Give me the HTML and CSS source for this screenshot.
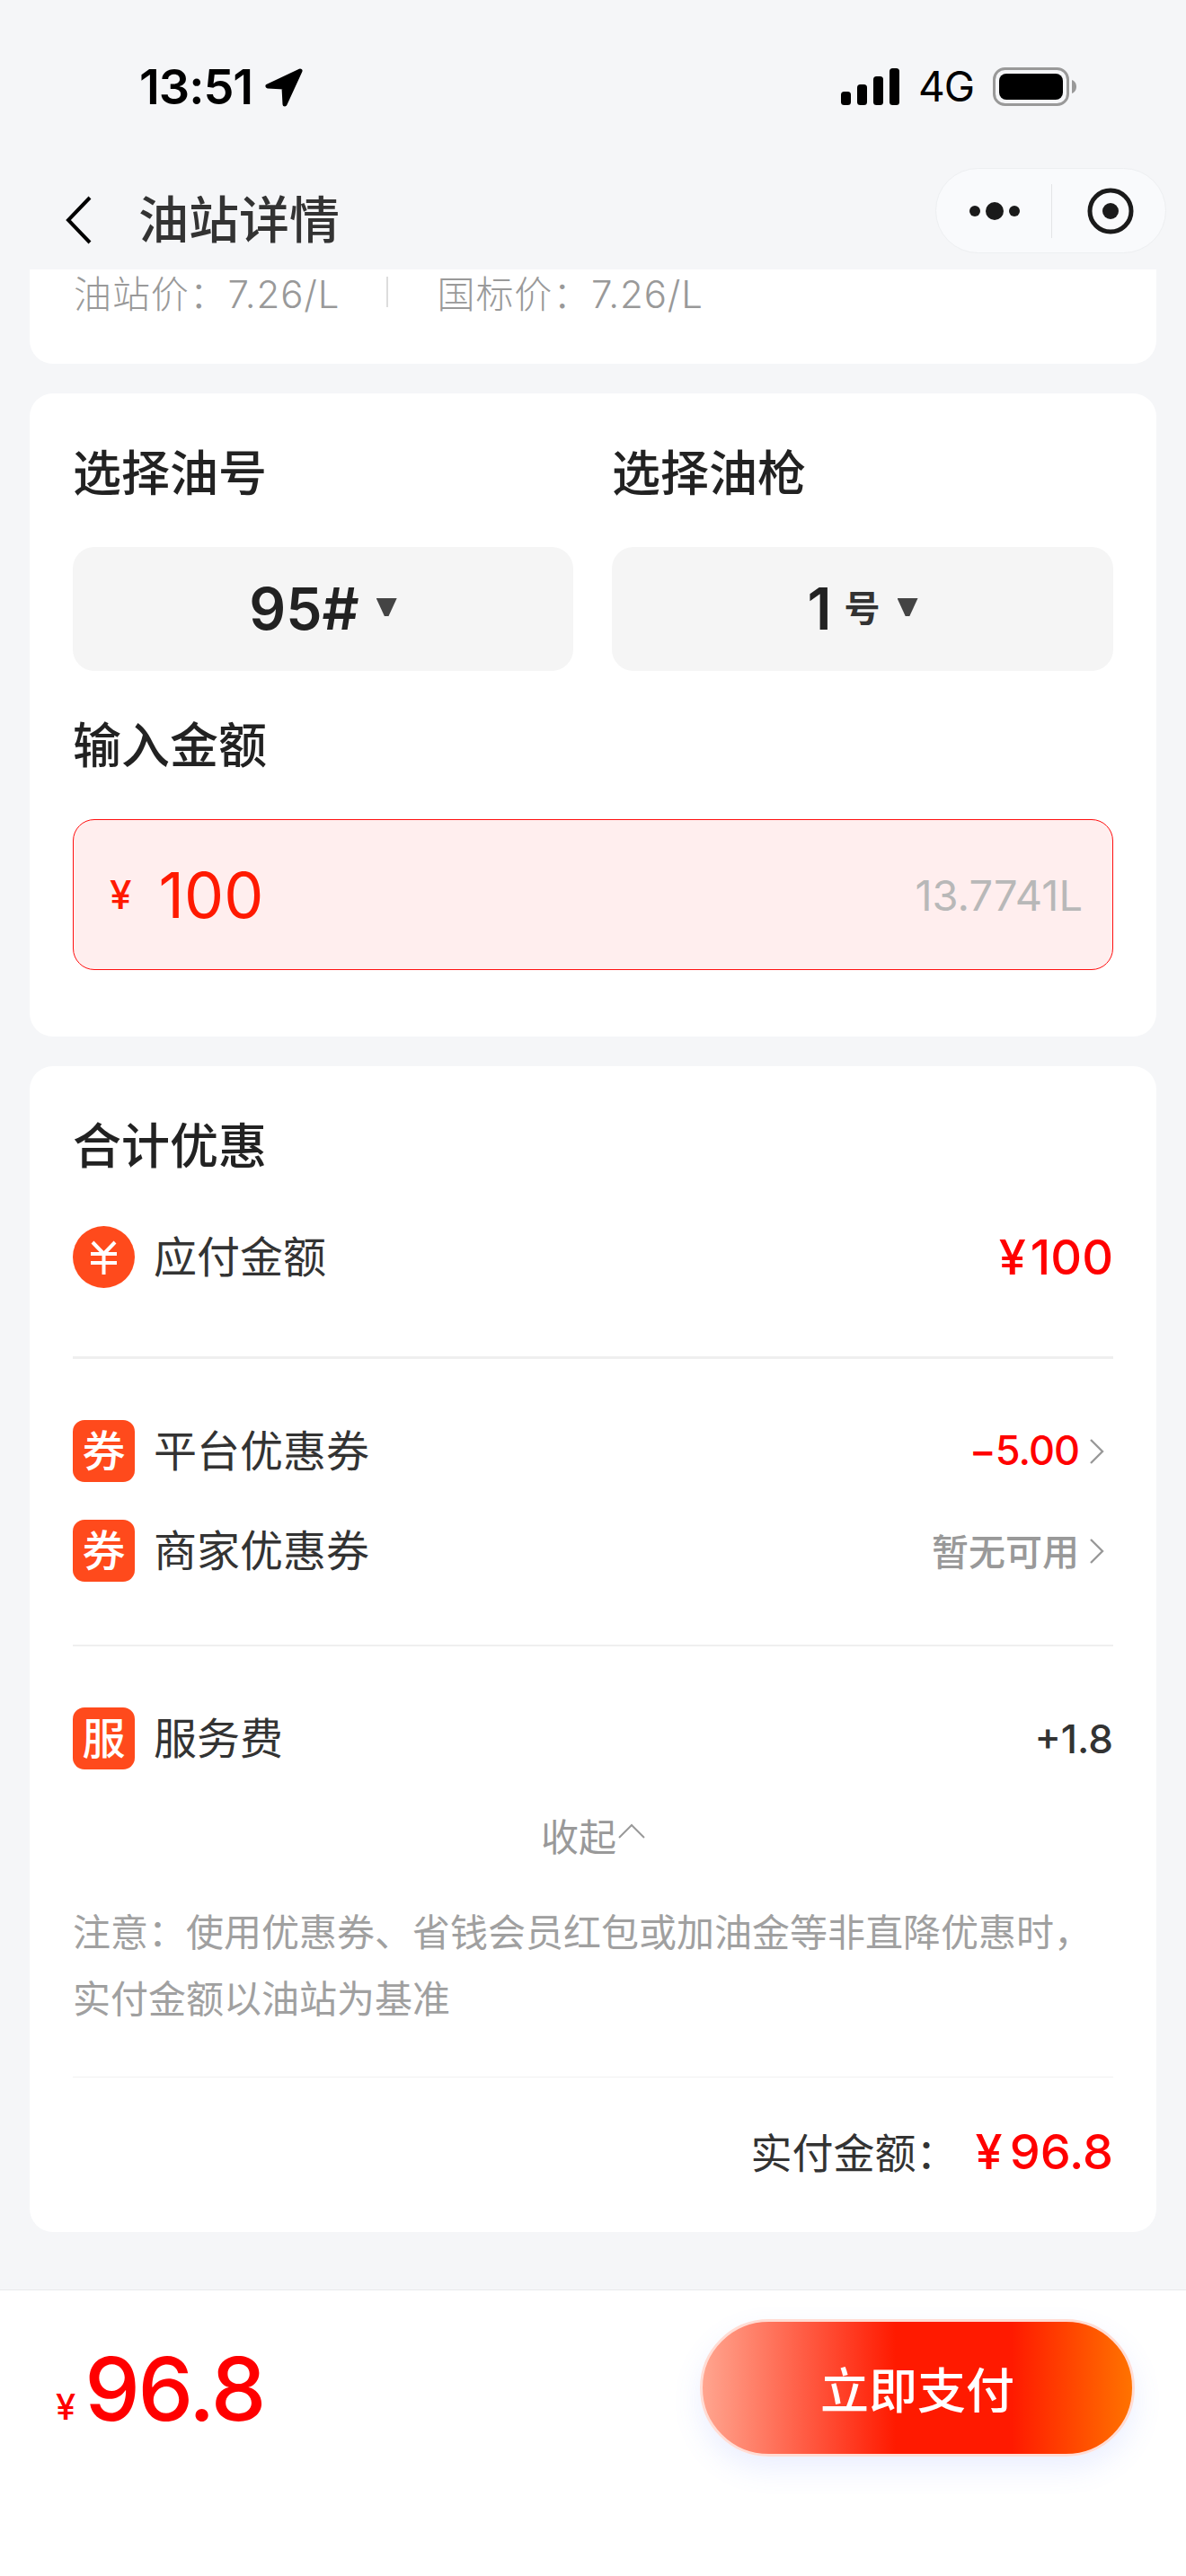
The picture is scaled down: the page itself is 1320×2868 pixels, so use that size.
FILE: index.html
```html
<!DOCTYPE html>
<html lang="zh-CN">
<head>
<meta charset="utf-8">
<title>油站详情</title>
<link rel="stylesheet" href="styles.css">
</head>
<body>
<div class="page">
  <header class="status">
    <div class="status-left">
      <span class="time">13:51</span>
      <svg class="loc" width="44" height="44" viewBox="0 0 44 44"><path d="M40 4 L4 21 L22 22 L23 41 Z" fill="#000" stroke="#000" stroke-width="5" stroke-linejoin="round"/></svg>
    </div>
    <div class="status-right">
      <svg class="signal" width="65" height="41" viewBox="0 0 65 41"><rect x="0" y="26" width="11" height="15" rx="3.5"/><rect x="18" y="18" width="11" height="23" rx="3.5"/><rect x="36" y="9" width="11" height="32" rx="3.5"/><rect x="54" y="0" width="11" height="41" rx="3.5"/></svg>
      <span class="net">4G</span>
      <svg class="battery" width="93" height="43" viewBox="0 0 93 43"><rect x="1.5" y="1.5" width="82" height="40" rx="12" fill="none" stroke="#999" stroke-width="3"/><rect x="7" y="7" width="71" height="29" rx="8" fill="#000"/><path d="M88 14 C91 15 93 18 93 21.5 C93 25 91 28 88 29 Z" fill="#999"/></svg>
    </div>
  </header>
  <nav class="nav">
    <svg class="back" width="29" height="54" viewBox="0 0 29 54"><path d="M27 2 L3 27 L27 52" fill="none" stroke="#000" stroke-width="4"/></svg>
    <h1 class="nav-title">油站详情</h1>
    <div class="capsule">
      <svg class="capsule-more" width="128" height="60" viewBox="0 0 128 60"><circle cx="43" cy="30" r="6"/><circle cx="65" cy="30" r="10"/><circle cx="87" cy="30" r="6"/></svg>
      <span class="capsule-line"></span>
      <svg class="capsule-target" width="128" height="60" viewBox="0 0 128 60"><circle cx="65" cy="30" r="23" fill="none" stroke="#1a1a1a" stroke-width="5"/><circle cx="65" cy="30" r="9" fill="#1a1a1a"/></svg>
    </div>
  </nav>
  <main class="content">
    <section class="card card-top">
      <span class="price">油站价：7.26/L</span>
      <span class="price-line"></span>
      <span class="price">国标价：7.26/L</span>
    </section>
    <section class="card card-form">
      <div class="picker-grid">
        <div class="picker-col">
          <h2 class="card-title">选择油号</h2>
          <div class="picker">
            <span class="picker-val">95#</span>
            <span class="tri"></span>
          </div>
        </div>
        <div class="picker-col">
          <h2 class="card-title">选择油枪</h2>
          <div class="picker">
            <span class="picker-val">1</span>
            <span class="picker-unit">号</span>
            <span class="tri"></span>
          </div>
        </div>
      </div>
      <h2 class="card-title amount-title">输入金额</h2>
      <div class="amount">
        <span class="amount-yen">¥</span>
        <span class="amount-val">100</span>
        <span class="amount-litre">13.7741L</span>
      </div>
    </section>
    <section class="card card-sum">
      <h2 class="card-title">合计优惠</h2>
      <div class="row row-first">
        <svg class="coin" width="69" height="69" viewBox="0 0 69 69"><circle cx="34.5" cy="34.5" r="34.5" fill="#ff4a1c"/><path d="M22 18 L34.5 31 L47 18 M20 31 H49 M20 41 H49 M34.5 31 V54" fill="none" stroke="#fff" stroke-width="4"/></svg>
        <span class="row-label">应付金额</span>
        <span class="row-total">¥<span class="thin-gap"></span>100</span>
      </div>
      <div class="rule"></div>
      <div class="row row-a">
        <span class="badge">券</span>
        <span class="row-label">平台优惠券</span>
        <span class="row-minus">−5.00</span>
        <svg class="chev" width="18" height="30" viewBox="0 0 18 30"><path d="M2 2 L15 15 L2 28" fill="none" stroke="#999" stroke-width="2.4"/></svg>
      </div>
      <div class="row row-b">
        <span class="badge">券</span>
        <span class="row-label">商家优惠券</span>
        <span class="row-none">暂无可用</span>
        <svg class="chev" width="18" height="30" viewBox="0 0 18 30"><path d="M2 2 L15 15 L2 28" fill="none" stroke="#999" stroke-width="2.4"/></svg>
      </div>
      <div class="rule rule-b"></div>
      <div class="row row-a">
        <span class="badge">服</span>
        <span class="row-label">服务费</span>
        <span class="row-plus">+1.8</span>
      </div>
      <div class="collapse">
        <span>收起</span>
        <svg class="caret" width="30" height="17" viewBox="0 0 30 17"><path d="M1 16 L15 2 L29 16" fill="none" stroke="#999" stroke-width="2"/></svg>
      </div>
      <p class="note">注意：使用优惠券、省钱会员红包或加油金等非直降优惠时，<br>实付金额以油站为基准</p>
      <div class="hair"></div>
      <div class="paid">
        <span class="paid-label">实付金额：</span>
        <span class="paid-val">¥<span class="thin-gap"></span>96.8</span>
      </div>
    </section>
  </main>
  <footer class="bar">
    <div class="bar-price">
      <span class="bar-yen">¥</span>
      <span class="bar-val">96.8</span>
    </div>
    <button class="pay" type="button">立即支付</button>
  </footer>
</div>
</body>
</html>
```
FILE: styles.css
```css
* { box-sizing: border-box; }
html, body { margin: 0; padding: 0; }
body {
  background: #f5f6f8;
  font-family: Inter, "Noto Sans CJK SC", sans-serif;
  color: #222;
}
h1, h2, p { margin: 0; font-weight: 500; }
svg { display: block; flex: none; }

.page {
  width: 1320px;
  height: 2868px;
  overflow: hidden;
  display: flex;
  flex-direction: column;
}

/* status bar */
.status {
  height: 170px;
  flex: none;
  display: flex;
  justify-content: space-between;
  padding: 70px 122px 0 155px;
}
.status-left { display: flex; align-items: center; height: 54px; }
.time { font-size: 54px; line-height: 54px; font-weight: 600; color: #000; letter-spacing: -1px; }
.loc { margin-left: 13px; }
.status-right { display: flex; align-items: flex-start; height: 54px; margin-top: 5px; }
.signal { fill: #000; margin-top: 1px; }
.net { font-size: 46px; line-height: 42px; margin-left: 21px; color: #000; font-weight: 400; letter-spacing: -1px; }
.battery { margin-left: 21px; }

/* nav */
.nav {
  height: 130px;
  flex: none;
  display: flex;
  align-items: flex-start;
  padding: 17px 22px 0 73px;
}
.back { margin-top: 31px; }
.nav-title {
  margin: 13px 0 0 52px;
  font-size: 56px;
  line-height: 90px;
  color: #333;
}
.capsule {
  margin-left: auto;
  width: 257px;
  height: 95px;
  border-radius: 48px;
  background: #f9fafc;
  border: 1px solid #edeff1;
  display: flex;
  align-items: center;
}
.capsule-more { fill: #1a1a1a; }
.capsule-line { width: 1px; height: 60px; background: #e4e5e7; flex: none; }

/* content */
.content {
  flex: 1;
  padding: 0 33px;
  display: flex;
  flex-direction: column;
  gap: 33px;
}
.card { background: #fff; border-radius: 26px; }

.card-top {
  height: 105px;
  border-radius: 0 0 26px 26px;
  padding: 0 0 0 49px;
  display: flex;
  align-items: flex-start;
}
.price { font-size: 42px; line-height: 56px; color: #999; font-weight: 300; letter-spacing: 0.9px; }
.price-line { width: 2px; height: 34px; background: #ddd; margin: 8px 54px 0 52px; }

.card-form { height: 716px; padding: 52px 48px 0; }
.card-title { font-size: 54px; line-height: 76px; color: #222; font-weight: 500; }
.picker-grid { display: grid; grid-template-columns: 557px 558px; column-gap: 43px; }
.picker {
  margin-top: 43px;
  height: 138px;
  border-radius: 24px;
  background: #f5f5f5;
  display: flex;
  align-items: center;
  justify-content: center;
}
.picker-val { font-size: 64px; line-height: 76px; font-weight: 600; color: #222; }
.picker-unit { font-size: 40px; line-height: 60px; font-weight: 600; color: #333; margin-left: 14px; }
.tri {
  width: 23px;
  height: 20px;
  margin-left: 19px;
  margin-top: -4px;
  background: #444;
  clip-path: polygon(0 0, 100% 0, 60% 100%, 40% 100%);
}
.amount-title { margin-top: 46px; }
.amount {
  margin-top: 43px;
  height: 168px;
  border-radius: 24px;
  background: #ffeeee;
  border: 1px solid #ff1010;
  display: flex;
  align-items: center;
  padding: 0 33px 0 40px;
}
.amount-yen { font-size: 44px; color: #ff1a00; font-weight: 500; }
.amount-val { font-size: 70px; color: #ff1a00; margin-left: 30px; font-weight: 400; }
.amount-litre { margin-left: auto; font-size: 47px; color: #b8b8b8; font-weight: 400; }

.card-sum { height: 1298px; padding: 52px 48px 0; }
.row { display: flex; align-items: center; height: 69px; }
.row-first { margin-top: 50px; }
.row-a { margin-top: 68px; }
.row-b { margin-top: 42px; }
.row-label { font-size: 48px; line-height: 69px; color: #333; margin-left: 21px; }
.row-total { margin-left: auto; font-size: 54px; font-weight: 500; color: #ff0000; }
.thin-gap { display: inline-block; width: 5px; }
.row-minus { margin-left: auto; font-size: 45px; font-weight: 500; color: #ff0000; letter-spacing: -1px; margin-top: -3px; }
.row-none { margin-left: auto; font-size: 41px; font-weight: 500; color: #999; margin-top: -3px; }
.chev { margin: 0 9px 0 11px; }
.row-plus { margin-left: auto; font-size: 44px; font-weight: 500; color: #333; }
.badge {
  width: 69px;
  height: 69px;
  flex: none;
  border-radius: 13px;
  background: #ff4a1c;
  color: #fff;
  font-size: 48px;
  font-weight: 500;
  line-height: 69px;
  text-align: center;
}
.rule { height: 3px; background: #efefef; margin-top: 76px; }
.rule-b { margin-top: 70px; height: 2px; }
.collapse {
  margin-top: 48px;
  height: 48px;
  display: flex;
  align-items: center;
  justify-content: center;
  gap: 2px;
  font-size: 42px;
  color: #999;
  font-weight: 400;
}
.caret { margin-top: -8px; }
.note {
  margin-top: 49px;
  font-size: 42px;
  line-height: 74px;
  color: #a0a0a0;
  font-weight: 400;
  white-space: nowrap;
}
.hair { height: 1px; background: #f1f1f1; margin-top: 49px; }
.paid {
  margin-top: 52px;
  height: 60px;
  display: flex;
  align-items: center;
  justify-content: flex-end;
}
.paid-label { font-size: 46px; color: #333; font-weight: 400; margin-top: -2px; }
.paid-val { font-size: 54px; font-weight: 500; color: #ff0000; margin-left: 20px; }
.paid-val .thin-gap { width: 8px; }

/* bottom bar */
.bar {
  height: 319px;
  flex: none;
  background: #fff;
  border-top: 1px solid #e9eaec;
  display: flex;
  align-items: flex-start;
  padding: 32px 57px 0 62px;
  justify-content: space-between;
}
.bar-price { display: flex; align-items: flex-end; margin-top: 18px; height: 120px; }
.bar-yen { font-size: 40px; line-height: 40px; color: #ff0000; font-weight: 500; margin-bottom: 20px; }
.bar-val { font-size: 98px; line-height: 120px; font-weight: 500; color: #ff0000; margin-left: 10px; letter-spacing: -2.4px; }
.pay {
  width: 484px;
  height: 153px;
  border-radius: 77px;
  border: 3px solid #ffdcd4;
  background: linear-gradient(90deg, #ffa58f 0%, #ff1a00 45%, #ff1a00 72%, #ff7300 100%);
  box-shadow: 0 14px 32px rgba(90, 120, 255, 0.12);
  color: #fff;
  font-family: inherit;
  font-size: 54px;
  font-weight: 500;
  padding: 0;
}
```
